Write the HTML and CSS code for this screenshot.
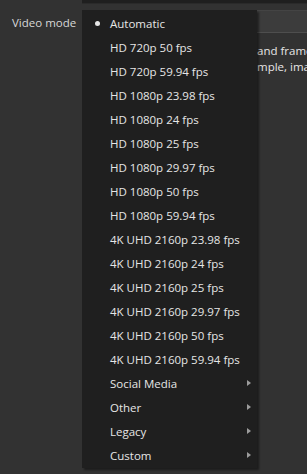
FILE: index.html
```html
<!DOCTYPE html>
<html>
<head>
  <meta charset="utf-8">
  <meta name="viewport" content="width=device-width">
  <title>Video mode</title>
  <link rel="stylesheet" href="styles.css">
</head>
<body>
<div class="row prev">
  <div class="label"></div>
  <div class="input"></div>
</div>
<div class="row">
  <div class="label">Video mode</div>
  <div class="combo"></div>
</div>
<div class="desc">
  <div class="line"><span class="cut">Sets the output resolution </span>and frame rate of the</div>
  <div class="line"><span class="cut">project. For exa</span>mple, images and</div>
</div>

<div class="menu">
  <div class="item checked"><span class="mark"></span><span class="text">Automatic</span></div>
  <div class="item"><span class="mark"></span><span class="text">HD 720p 50 fps</span></div>
  <div class="item"><span class="mark"></span><span class="text">HD 720p 59.94 fps</span></div>
  <div class="item"><span class="mark"></span><span class="text">HD 1080p 23.98 fps</span></div>
  <div class="item"><span class="mark"></span><span class="text">HD 1080p 24 fps</span></div>
  <div class="item"><span class="mark"></span><span class="text">HD 1080p 25 fps</span></div>
  <div class="item"><span class="mark"></span><span class="text">HD 1080p 29.97 fps</span></div>
  <div class="item"><span class="mark"></span><span class="text">HD 1080p 50 fps</span></div>
  <div class="item"><span class="mark"></span><span class="text">HD 1080p 59.94 fps</span></div>
  <div class="item"><span class="mark"></span><span class="text">4K UHD 2160p 23.98 fps</span></div>
  <div class="item"><span class="mark"></span><span class="text">4K UHD 2160p 24 fps</span></div>
  <div class="item"><span class="mark"></span><span class="text">4K UHD 2160p 25 fps</span></div>
  <div class="item"><span class="mark"></span><span class="text">4K UHD 2160p 29.97 fps</span></div>
  <div class="item"><span class="mark"></span><span class="text">4K UHD 2160p 50 fps</span></div>
  <div class="item"><span class="mark"></span><span class="text">4K UHD 2160p 59.94 fps</span></div>
  <div class="item sub"><span class="mark"></span><span class="text">Social Media</span><span class="arrow"></span></div>
  <div class="item sub"><span class="mark"></span><span class="text">Other</span><span class="arrow"></span></div>
  <div class="item sub"><span class="mark"></span><span class="text">Legacy</span><span class="arrow"></span></div>
  <div class="item sub"><span class="mark"></span><span class="text">Custom</span><span class="arrow"></span></div>
</div>
</body>
</html>
```

FILE: styles.css
```css
body {
  margin: 0;
  background: #323232;
  color: #e6e6e6;
  font: 11.5px "Open Sans", "Noto Sans", sans-serif;
  height: 474px;
  overflow: hidden;
}
.row {
  display: flex;
}
.label {
  width: 70px;
  padding-left: 12px;
  line-height: 26px;
  color: #d8d8d8;
}
.prev .input {
  flex: 1;
  height: 3px;
  background: #1f1f1f;
  border-bottom: 1px solid #2a2a2a;
}
.prev {
  margin-bottom: 6px;
}
.combo {
  flex: 1;
  height: 21px;
  background: #3c3c3c;
  border-bottom: 1px solid #4e4e4e;
  border-top: 1px solid #444;
}
.desc {
  margin-left: 90px;
  padding-top: 7px;
  line-height: 16px;
  overflow: hidden;
}
.line {
  display: flex;
  white-space: nowrap;
}
.cut {
  flex-shrink: 0;
  width: 167px;
  display: flex;
  justify-content: flex-end;
  overflow: hidden;
}
.menu {
  position: absolute;
  left: 82px;
  top: 10px;
  width: 175px;
  padding: 1px 0;
  background: #1f1f1f;
  box-shadow: 2px 2px 2px rgba(0, 0, 0, .45);
}
.item {
  display: flex;
  align-items: center;
  height: 24px;
}
.mark {
  width: 28px;
  display: flex;
  justify-content: center;
}
.checked .mark::before {
  content: "";
  width: 5px;
  height: 5px;
  border-radius: 50%;
  background: #e6e6e6;
  margin-left: 2px;
}
.text {
  flex: 1;
}
.arrow {
  width: 0;
  height: 0;
  border-left: 4px solid #9c9c9c;
  border-top: 3.5px solid transparent;
  border-bottom: 3.5px solid transparent;
  margin-right: 6px;
}
```
